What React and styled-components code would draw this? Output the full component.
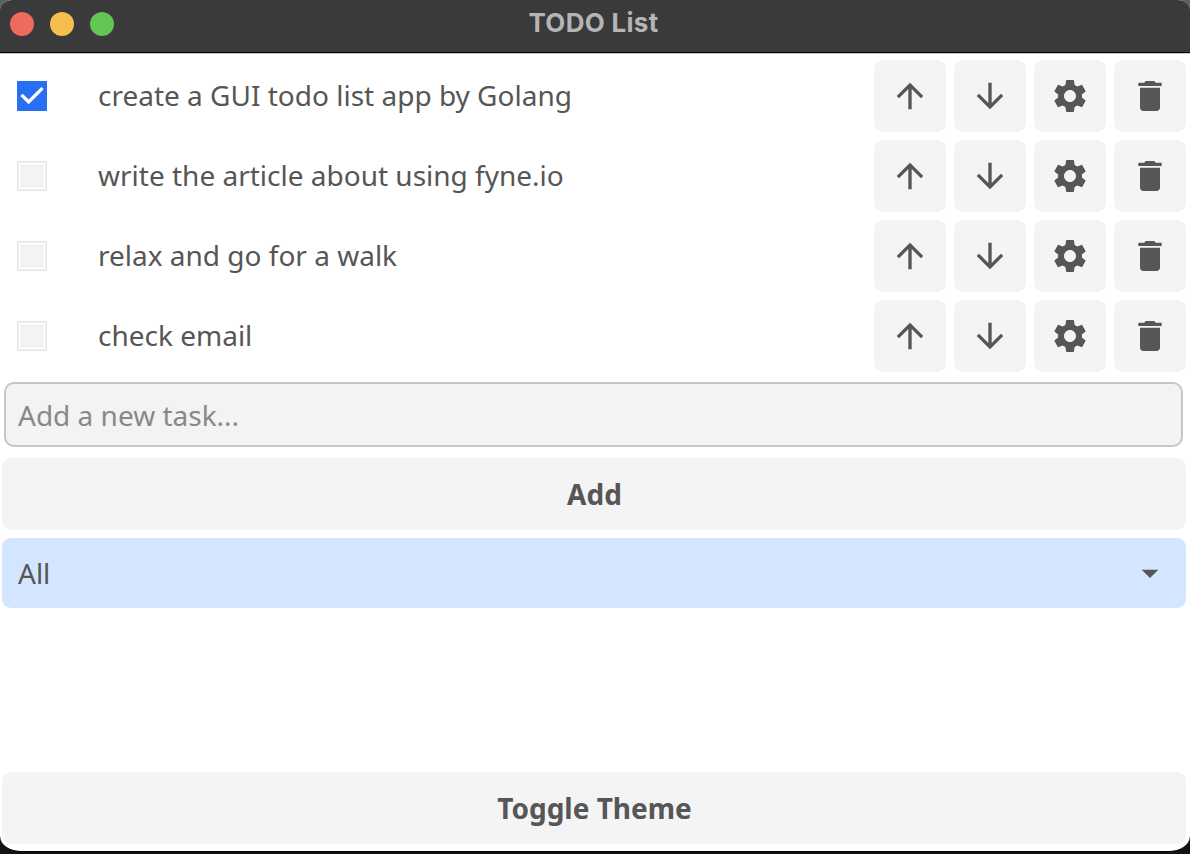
import React, { useState } from "react";
import styled, { createGlobalStyle } from "styled-components";

const GlobalStyle = createGlobalStyle`
  *, *::before, *::after { box-sizing: border-box; }
  html, body { margin: 0; padding: 0; background: #121212; overflow: hidden; }
`;

const Desktop = styled.div`
  width: 1190px;
  height: 854px;
  background: linear-gradient(#5c5f66 0 30px, #121212 30px);
  font-family: "Noto Sans", sans-serif;
  font-size: 28px;
  color: #565656;
`;

const Window = styled.main`
  display: flex;
  flex-direction: column;
  height: 852px;
  border-radius: 12px 12px 20px 20px / 10px 10px 16px 16px;
  overflow: hidden;
  background: #fff;
  border-bottom: 1px solid #000;
`;

const TitleBar = styled.header`
  display: grid;
  grid-template-columns: 1fr auto 1fr;
  align-items: center;
  flex: none;
  height: 53px;
  padding: 0 10px 5px;
  background: #3a3a3a;
  border-bottom: 1px solid #000;
`;

const Lights = styled.div`
  display: flex;
  gap: 16px;
`;

const Light = styled.span`
  width: 24px;
  height: 24px;
  border-radius: 50%;
  background: ${(p) => p.$color};
`;

const Title = styled.h1`
  margin: 0 3px 2px 0;
  font: 700 26px/32px Inter, sans-serif;
  letter-spacing: 0.3px;
  color: #b5b5b5;
`;

const Content = styled.section`
  display: flex;
  flex-direction: column;
  flex: 1;
  padding: 6px 4px 7px 2px;
  border-top: 1px solid #c8c8c8;
`;

const TaskList = styled.ul`
  display: flex;
  flex-direction: column;
  gap: 8px;
  margin: 0;
  padding: 0;
  list-style: none;
`;

const TaskRow = styled.li`
  display: flex;
  align-items: center;
  gap: 8px;
  height: 72px;
  padding-left: 15px;
`;

const CheckBox = styled.button`
  display: flex;
  align-items: center;
  justify-content: center;
  width: 30px;
  height: 30px;
  margin-right: 43px;
  padding: 0;
  border: ${(p) => (p.$checked ? "0" : "1px solid #e5e5e5")};
  background: ${(p) => (p.$checked ? "#296ff6" : "#f3f3f3")};
  box-shadow: ${(p) =>
    p.$checked ? "none" : "inset 0 0 0 1px #f0f0f0, inset 0 0 0 2.5px #fff"};
`;

const TaskName = styled.span`
  flex: 1;
  padding-bottom: 2px;
  line-height: 40px;
  white-space: nowrap;
`;

const IconButton = styled.button`
  display: flex;
  align-items: center;
  justify-content: center;
  width: 72px;
  height: 72px;
  padding: 0;
  border: 0;
  border-radius: 9px;
  background: #f4f4f4;
  color: #565656;
`;

const Glyph = styled.svg`
  display: block;
  flex: none;
  width: 40px;
  height: 40px;
  fill: ${(p) => p.$color || "currentColor"};
`;

const TaskInput = styled.input`
  height: 65px;
  margin: 10px 0 0 2px;
  width: 1179px;
  padding: 0 12px;
  border: 2px solid #c6c6c6;
  border-radius: 10px;
  background: #f3f3f3;
  font: inherit;
  color: inherit;
  outline: none;
  &::placeholder { color: #888; opacity: 1; }
`;

const WideButton = styled.button`
  flex: none;
  height: 72px;
  margin-top: ${(p) => p.$top};
  padding: 0 0 0 1px;
  border: 0;
  border-radius: 9px;
  background: #f4f4f4;
  font: inherit;
  font-weight: 700;
  color: #565656;
`;

const FilterSelect = styled.button`
  display: flex;
  align-items: center;
  justify-content: space-between;
  height: 70px;
  margin-top: 8px;
  padding: 0 16px;
  border: 0;
  border-radius: 9px;
  background: #d4e6ff;
  font: inherit;
  color: #565656;
`;

const PATHS = {
  up: "M4 12l1.41 1.41L11 7.83V20h2V7.83l5.58 5.59L20 12l-8-8-8 8z",
  down: "M20 12l-1.41-1.41L13 16.17V4h-2v12.17l-5.58-5.59L4 12l8 8 8-8z",
  settings:
    "M19.14 12.94c.04-.3.06-.61.06-.94 0-.32-.02-.64-.07-.94l2.03-1.58c.18-.14.23-.41.12-.61l-1.92-3.32c-.12-.22-.37-.29-.59-.22l-2.39.96c-.5-.38-1.03-.7-1.62-.94l-.36-2.54c-.04-.24-.24-.41-.48-.41h-3.84c-.24 0-.43.17-.47.41l-.36 2.54c-.59.24-1.13.57-1.62.94l-2.39-.96c-.22-.08-.47 0-.59.22L2.74 8.87c-.12.21-.08.47.12.61l2.03 1.58c-.05.3-.09.63-.09.94s.02.64.07.94l-2.03 1.58c-.18.14-.23.41-.12.61l1.92 3.32c.12.22.37.29.59.22l2.39-.96c.5.38 1.03.7 1.62.94l.36 2.54c.05.24.24.41.48.41h3.84c.24 0 .44-.17.47-.41l.36-2.54c.59-.24 1.13-.56 1.62-.94l2.39.96c.22.08.47 0 .59-.22l1.92-3.32c.12-.22.07-.47-.12-.61l-2.01-1.58zM12 15.6c-1.98 0-3.6-1.62-3.6-3.6s1.62-3.6 3.6-3.6 3.6 1.62 3.6 3.6-1.62 3.6-3.6 3.6z",
  remove:
    "M6 19c0 1.1.9 2 2 2h8c1.1 0 2-.9 2-2V7H6v12zM19 4h-3.5l-1-1h-5l-1 1H5v2h14V4z",
  check: "M10 17l-5-5 1.41-1.41L10 14.17l7.59-7.59L19 8l-9 9z",
  caret: "M7 10l5 5 5-5z",
};

const Icon = ({ name, color }) => (
  <Glyph viewBox="0 0 24 24" $color={color} aria-hidden="true">
    <path d={PATHS[name]} />
  </Glyph>
);

const INITIAL = [
  { name: "create a GUI todo list app by Golang", done: true },
  { name: "write the article about using fyne.io", done: false },
  { name: "relax and go for a walk", done: false },
  { name: "check email", done: false },
];

export default function App() {
  const [tasks, setTasks] = useState(INITIAL);
  const toggle = (index) =>
    setTasks(tasks.map((t, i) => (i === index ? { ...t, done: !t.done } : t)));

  return (
    <Desktop>
      <GlobalStyle />
      <Window>
        <TitleBar>
          <Lights>
            <Light $color="#ed6a5e" />
            <Light $color="#f5bf4f" />
            <Light $color="#62c655" />
          </Lights>
          <Title>TODO List</Title>
        </TitleBar>
        <Content>
          <TaskList>
            {tasks.map((task, i) => (
              <TaskRow key={task.name}>
                <CheckBox $checked={task.done} onClick={() => toggle(i)}>
                  {task.done && <Icon name="check" color="#fff" />}
                </CheckBox>
                <TaskName>{task.name}</TaskName>
                {["up", "down", "settings", "remove"].map((name) => (
                  <IconButton key={name}>
                    <Icon name={name} />
                  </IconButton>
                ))}
              </TaskRow>
            ))}
          </TaskList>
          <TaskInput placeholder="Add a new task..." />
          <WideButton $top="11px">Add</WideButton>
          <FilterSelect>
            All
            <Icon name="caret" />
          </FilterSelect>
          <WideButton $top="auto">Toggle Theme</WideButton>
        </Content>
      </Window>
    </Desktop>
  );
}
